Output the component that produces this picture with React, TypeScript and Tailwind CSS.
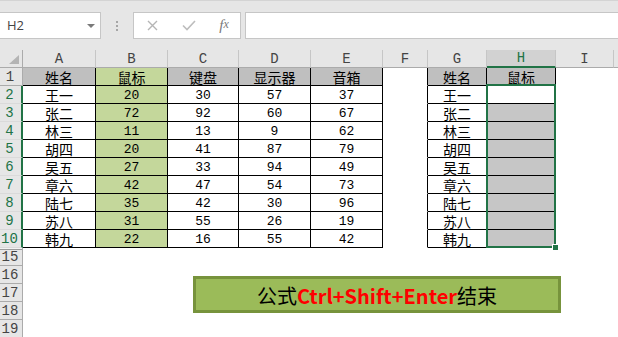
import React from 'react';

const names = ['王一', '张二', '林三', '胡四', '吴五', '章六', '陆七', '苏八', '韩九'];
const mouse = [20, 72, 11, 20, 27, 42, 35, 31, 22];
const keyboard = [30, 92, 13, 41, 33, 47, 42, 55, 16];
const monitor = [57, 60, 9, 87, 94, 54, 30, 26, 55];
const speaker = [37, 67, 62, 79, 49, 73, 96, 19, 42];

const LETTERS = ['A', 'B', 'C', 'D', 'E', 'F', 'G', 'H', 'I'];

const cjk = "font-['Noto_Sans_CJK_SC',sans-serif] text-[14px] leading-[14px]";
const mono = "font-['Liberation_Mono','DejaVu_Sans_Mono',monospace] text-[13px] leading-[13px]";

type CellProps = {
  children?: React.ReactNode;
  bg?: string;
  right?: string;
  bottom?: string;
  font?: string;
};

function Cell({ children, bg = 'bg-white', right = 'border-r-transparent', bottom = 'border-b-transparent', font = cjk }: CellProps) {
  return (
    <div className={`h-[18px] border-r border-b ${right} ${bottom} ${bg} ${font} flex items-center justify-center pt-[1px] text-black`}>
      {children}
    </div>
  );
}

function RowHeader({ n, selected, first }: { n: number; selected?: boolean; first?: boolean }) {
  return (
    <div
      className={`h-[18px] bg-[#e6e6e6] flex items-center justify-center pr-[2px] pt-[1px] font-['Liberation_Mono',monospace] text-[14px] leading-none ${
        selected ? 'text-[#217346] border-r-2 border-r-[#217346] border-b border-b-[#dadada]' : 'text-[#444] border-r border-r-[#ababab] border-b border-b-[#ababab]'
      } ${first ? 'shadow-[inset_0_1px_0_#f2f2f2,inset_0_2px_0_#9b9b9b]' : ''}`}
    >
      {n}
    </div>
  );
}

function Toolbar() {
  return (
    <div className="h-[40px] bg-[#e6e6e6] border-t border-[#d4d4d4] pt-[11px] flex">
      {/* name box */}
      <div className="w-[101px] h-[27px] bg-white border border-[#c6c6c6] border-l-0 flex items-center justify-between pl-[7px] pr-[5px]">
        <span className="font-['Open_Sans','Noto_Sans',sans-serif] text-[13px] text-[#444]">H2</span>
        <svg width="8" height="4" viewBox="0 0 8 4">
          <polygon points="0,0 8,0 4,4" fill="#7a7a7a" />
        </svg>
      </div>
      <div className="w-[32px] h-[27px] flex flex-col items-center justify-center gap-[2px]">
        <div className="w-[2px] h-[2px] bg-[#a6a6a6]" />
        <div className="w-[2px] h-[2px] bg-[#a6a6a6]" />
        <div className="w-[2px] h-[2px] bg-[#a6a6a6]" />
      </div>
      {/* cancel / enter / fx */}
      <div className="w-[108px] h-[27px] bg-white border border-[#c6c6c6] flex items-center">
        <div className="w-[36px] flex justify-center">
          <svg width="11" height="11" viewBox="0 0 11 11">
            <path d="M1 1 L10 10 M10 1 L1 10" stroke="#b5b5b5" strokeWidth="1.4" />
          </svg>
        </div>
        <div className="w-[38px] flex justify-center">
          <svg width="14" height="11" viewBox="0 0 14 11">
            <path d="M1 5.5 L5 9.5 L13 1" stroke="#bdbdbd" strokeWidth="1.6" fill="none" />
          </svg>
        </div>
        <div className="w-[32px] flex justify-center font-['Liberation_Serif',serif] italic text-[15px] text-[#7a7a7a] leading-none">
          f<span className="text-[12px]">x</span>
        </div>
      </div>
      {/* formula input */}
      <div className="ml-[4px] flex-1 h-[27px] bg-white border border-[#c6c6c6] border-r-0" />
    </div>
  );
}

export default function App() {
  const tableRight = 'border-r-black';
  const tableBottom = 'border-b-black';

  return (
    <div className="relative w-[618px] h-[337px] overflow-hidden bg-white">
      <Toolbar />
      <div className="h-[10px] bg-[#e6e6e6]" />

      <div className="grid grid-cols-[23px_73px_72px_71px_72px_72px_45px_59px_69px_58px_1fr]">
        {/* column headers */}
        <div className="h-[18px] bg-[#e6e6e6] border-r border-r-[#ababab] border-b border-b-[#ababab] flex items-end justify-end pr-[3px] pb-[3px]">
          <svg width="10" height="9" viewBox="0 0 10 9">
            <polygon points="10,0 10,9 0,9" fill="#b4b4b4" />
          </svg>
        </div>
        {LETTERS.map((l) =>
          l === 'H' ? (
            <div key={l} className="h-[18px] bg-[#d2d2d2] border-r border-r-[#c6c6c6] border-b-2 border-b-[#217346] flex items-center justify-center font-['Liberation_Mono',monospace] text-[14px] text-[#217346] leading-none">
              {l}
            </div>
          ) : (
            <div key={l} className="h-[18px] bg-[#e6e6e6] border-r border-r-[#c6c6c6] border-b border-b-[#ababab] flex items-center justify-center font-['Liberation_Mono',monospace] text-[14px] text-[#444] leading-none">
              {l}
            </div>
          )
        )}
        <div className="h-[18px] bg-[#e6e6e6] border-b border-b-[#ababab]" />

        {/* row 1 */}
        <RowHeader n={1} />
        <Cell bg="bg-[#bfbfbf]" right={tableRight} bottom={tableBottom}>姓名</Cell>
        <Cell bg="bg-[#c4d79b]" right={tableRight} bottom={tableBottom}>鼠标</Cell>
        <Cell bg="bg-[#bfbfbf]" right={tableRight} bottom={tableBottom}>键盘</Cell>
        <Cell bg="bg-[#bfbfbf]" right={tableRight} bottom={tableBottom}>显示器</Cell>
        <Cell bg="bg-[#bfbfbf]" right={tableRight} bottom={tableBottom}>音箱</Cell>
        <Cell right={tableRight} />
        <Cell bg="bg-[#bfbfbf]" right={tableRight} bottom={tableBottom}>姓名</Cell>
        <Cell bg="bg-[#bfbfbf]" right={tableRight} bottom={tableBottom}>鼠标</Cell>
        <Cell />
        <Cell />

        {/* rows 2-10 */}
        {names.map((name, i) => (
          <React.Fragment key={name}>
            <RowHeader n={i + 2} selected />
            <Cell right={tableRight} bottom={tableBottom}>{name}</Cell>
            <Cell bg="bg-[#c4d79b]" right={tableRight} bottom={tableBottom} font={mono}>{mouse[i]}</Cell>
            <Cell right={tableRight} bottom={tableBottom} font={mono}>{keyboard[i]}</Cell>
            <Cell right={tableRight} bottom={tableBottom} font={mono}>{monitor[i]}</Cell>
            <Cell right={tableRight} bottom={tableBottom} font={mono}>{speaker[i]}</Cell>
            <Cell right={tableRight} />
            <Cell right={tableRight} bottom={tableBottom}>{name}</Cell>
            <Cell bg={i === 0 ? 'bg-white' : 'bg-[#c6c6c6]'} right={tableRight} bottom={tableBottom} />
            <Cell />
            <Cell />
          </React.Fragment>
        ))}

        {/* rows 15-19 */}
        {[15, 16, 17, 18, 19].map((n) => (
          <React.Fragment key={n}>
            <RowHeader n={n} first={n === 15} />
            {Array.from({ length: 10 }).map((_, k) => (
              <Cell key={k} />
            ))}
          </React.Fragment>
        ))}
      </div>

      {/* selection H2:H10 */}
      <div className="absolute left-[486px] top-[84px] w-[70px] h-[164px] border-2 border-[#217346]" />
      <div className="absolute left-[552px] top-[244px] w-[7px] h-[7px] bg-[#217346] border border-white" />

      {/* note shape */}
      <div className="absolute left-[193px] top-[276px] w-[368px] h-[37px] bg-[#9bbb59] border-[3px] border-[#77933c] flex items-center justify-center pt-[3px] font-['Noto_Sans_CJK_SC',sans-serif] text-[20px] leading-none text-black">
        <span>公式</span>
        <span className="font-bold text-[#ff0000]">Ctrl+Shift+Enter</span>
        <span>结束</span>
      </div>
    </div>
  );
}
